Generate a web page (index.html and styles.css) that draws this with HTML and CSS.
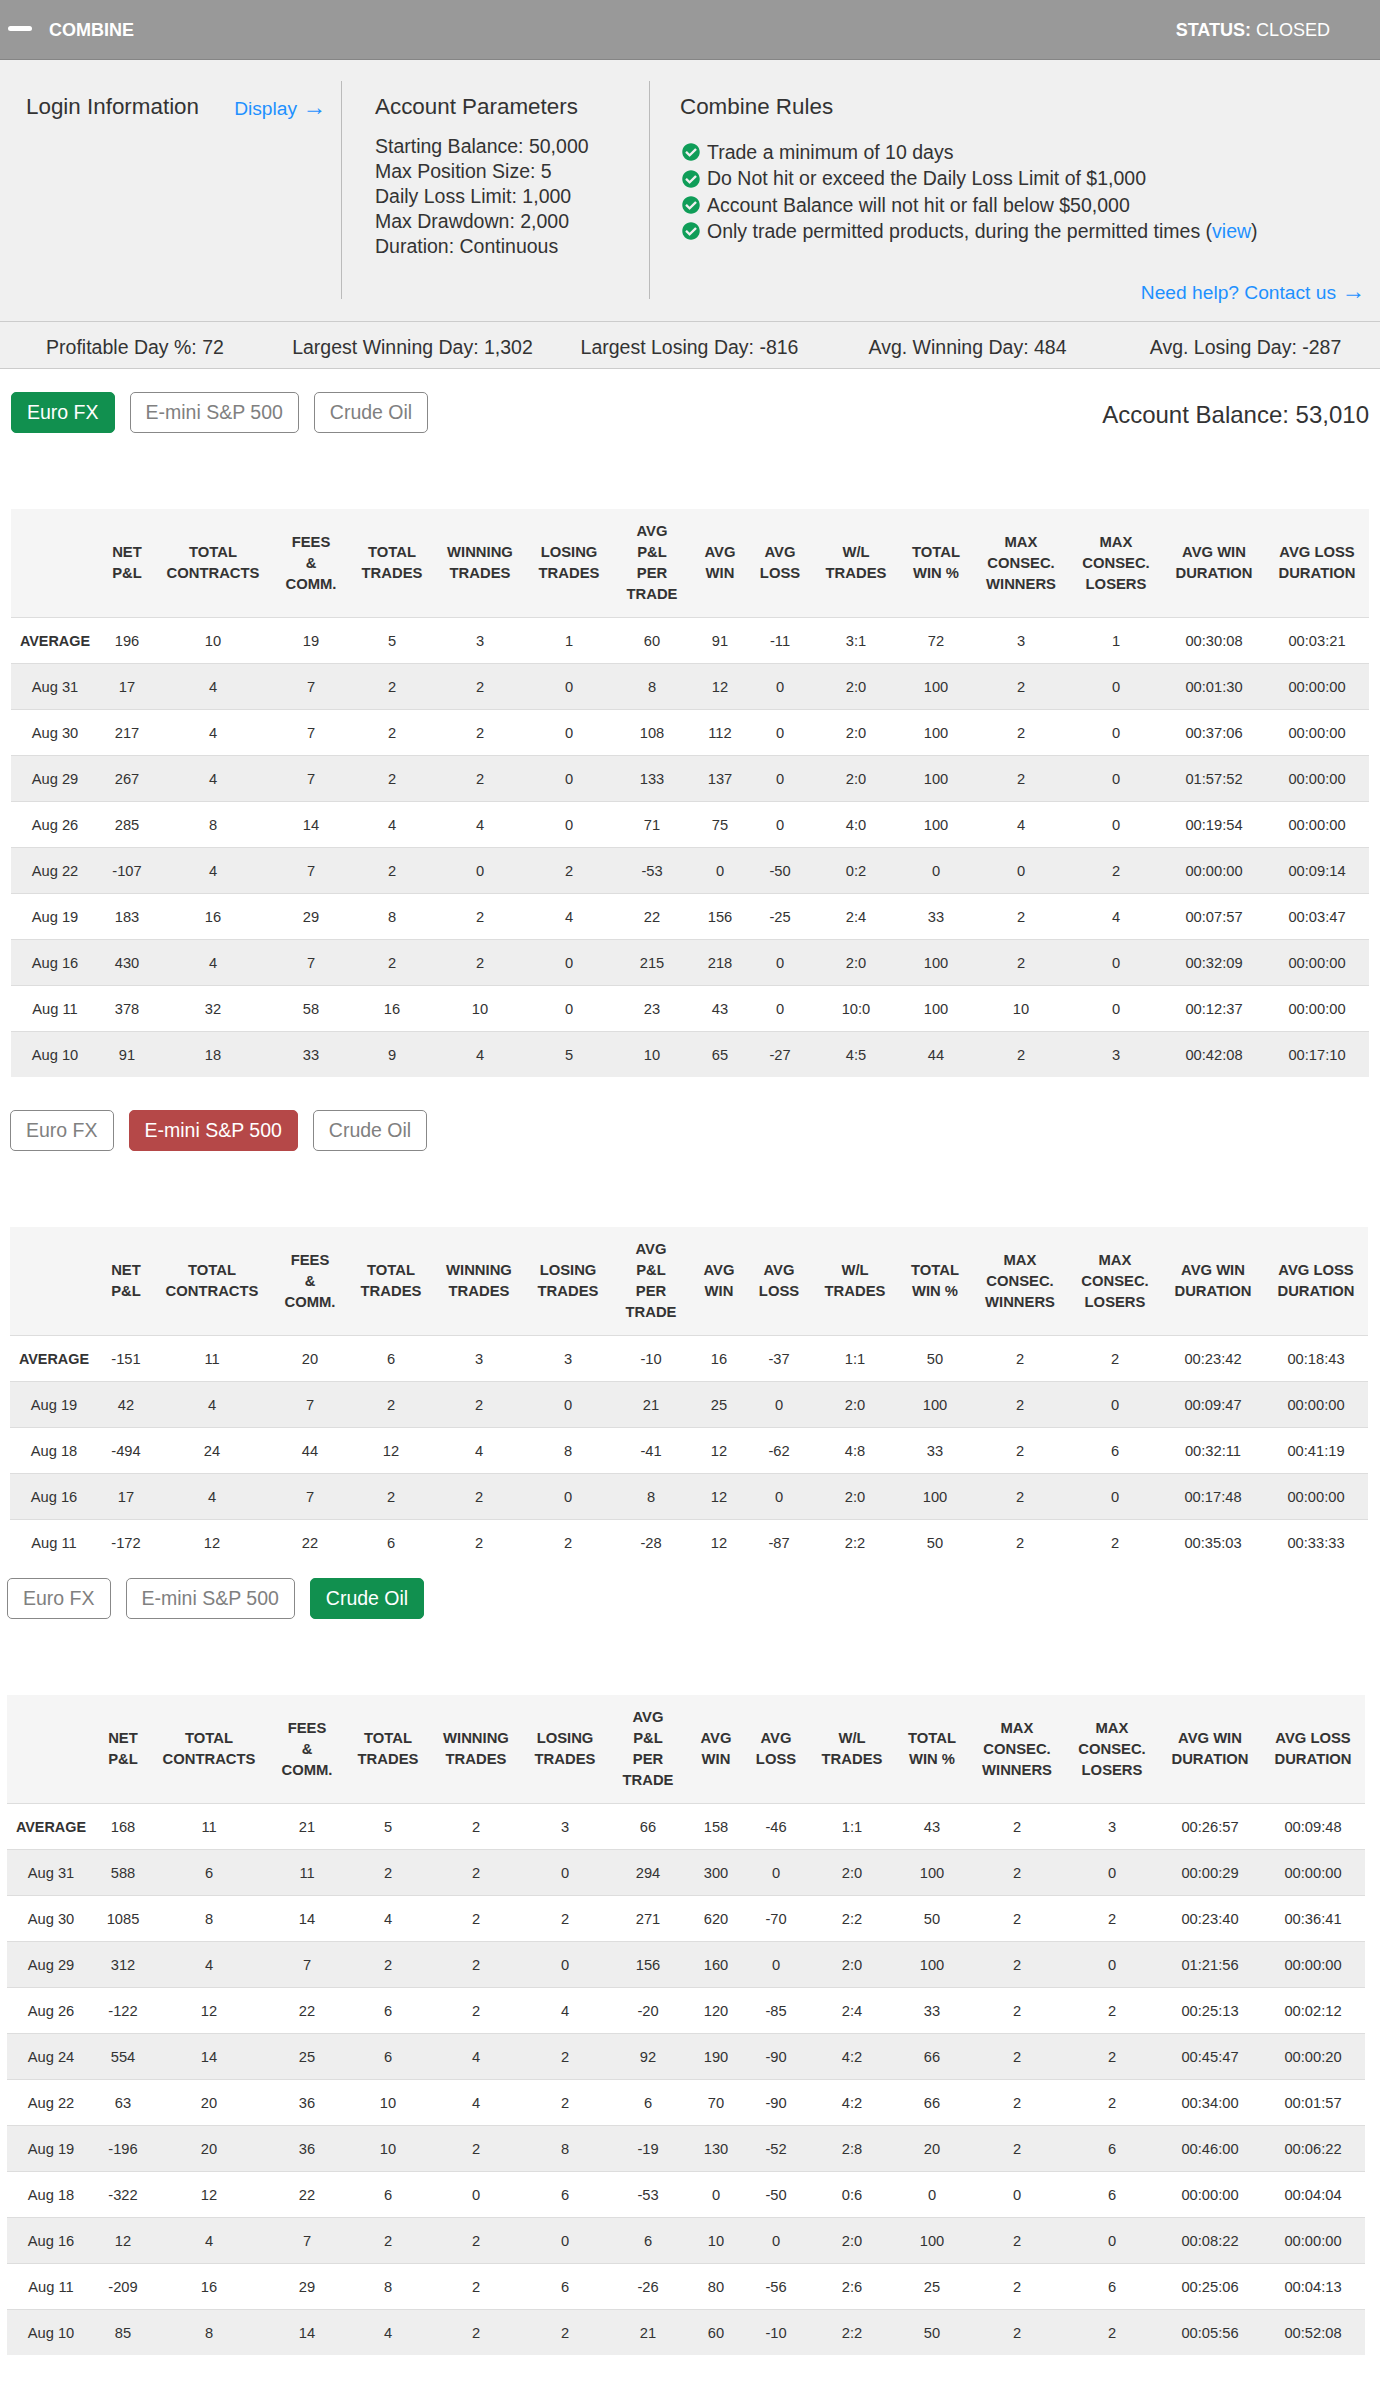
FILE: index.html
```html
<!DOCTYPE html>
<html lang="en">
<head>
<meta charset="utf-8">
<title>Combine</title>
<link rel="stylesheet" href="styles.css">
</head>
<body>
<svg class="defs" width="0" height="0" aria-hidden="true">
  <symbol id="check" viewBox="0 0 512 512"><path d="M504 256c0 136.967-111.033 248-248 248S8 392.967 8 256 119.033 8 256 8s248 111.033 248 248zM227.314 387.314l184-184c6.248-6.248 6.248-16.379 0-22.627l-22.627-22.627c-6.248-6.249-16.379-6.249-22.628 0L216 308.118l-70.059-70.059c-6.248-6.248-16.379-6.248-22.628 0l-22.627 22.627c-6.248 6.248-6.248 16.379 0 22.627l104 104c6.249 6.249 16.379 6.249 22.628.001z"/></symbol>
</svg>
<header class="topbar">
  <div class="topbar-left"><span class="minus"></span><b>COMBINE</b></div>
  <div class="status"><b>STATUS:</b> CLOSED</div>
</header>
<section class="panel">
  <div class="col col-login">
    <h2>Login Information</h2>
    <a class="link display" href="#">Display <span class="arrow">→</span></a>
  </div>
  <div class="col col-params">
    <h2>Account Parameters</h2>
    <ul class="params">
      <li>Starting Balance: 50,000</li>
      <li>Max Position Size: 5</li>
      <li>Daily Loss Limit: 1,000</li>
      <li>Max Drawdown: 2,000</li>
      <li>Duration: Continuous</li>
    </ul>
  </div>
  <div class="col col-rules">
    <h2>Combine Rules</h2>
    <ul class="rules">
      <li><svg class="ok"><use href="#check"/></svg>Trade a minimum of 10 days</li>
      <li><svg class="ok"><use href="#check"/></svg>Do Not hit or exceed the Daily Loss Limit of $1,000</li>
      <li><svg class="ok"><use href="#check"/></svg>Account Balance will not hit or fall below $50,000</li>
      <li><svg class="ok"><use href="#check"/></svg>Only trade permitted products, during the permitted times (<a class="link" href="#">view</a>)</li>
    </ul>
    <a class="link help" href="#">Need help? Contact us <span class="arrow">→</span></a>
  </div>
</section>
<section class="stats">
  <div>Profitable Day %: 72</div>
  <div>Largest Winning Day: 1,302</div>
  <div>Largest Losing Day: -816</div>
  <div>Avg. Winning Day: 484</div>
  <div>Avg. Losing Day: -287</div>
</section>
<main class="content">
  <section class="product product-euro">
    <div class="tabs-row">
      <div class="tabs">
        <a class="tab tab-green" href="#">Euro FX</a>
        <a class="tab" href="#">E-mini S&amp;P 500</a>
        <a class="tab" href="#">Crude Oil</a>
      </div>
      <div class="balance">Account Balance: 53,010</div>
    </div>
    <table class="stats-table">
      <colgroup><col class="c1"><col class="c2"><col class="c3"><col class="c4"><col class="c5"><col class="c6"><col class="c7"><col class="c8"><col class="c9"><col class="c10"><col class="c11"><col class="c12"><col class="c13"><col class="c14"><col class="c15"><col class="c16"></colgroup>
      <thead><tr><th></th><th>NET<br>P&amp;L</th><th>TOTAL<br>CONTRACTS</th><th>FEES<br>&amp;<br>COMM.</th><th>TOTAL<br>TRADES</th><th>WINNING<br>TRADES</th><th>LOSING<br>TRADES</th><th>AVG<br>P&amp;L<br>PER<br>TRADE</th><th>AVG<br>WIN</th><th>AVG<br>LOSS</th><th>W/L<br>TRADES</th><th>TOTAL<br>WIN %</th><th>MAX<br>CONSEC.<br>WINNERS</th><th>MAX<br>CONSEC.<br>LOSERS</th><th>AVG WIN<br>DURATION</th><th>AVG LOSS<br>DURATION</th></tr></thead>
      <tbody>
        <tr><td class="avg">AVERAGE</td><td>196</td><td>10</td><td>19</td><td>5</td><td>3</td><td>1</td><td>60</td><td>91</td><td>-11</td><td>3:1</td><td>72</td><td>3</td><td>1</td><td>00:30:08</td><td>00:03:21</td></tr>
        <tr><td>Aug 31</td><td>17</td><td>4</td><td>7</td><td>2</td><td>2</td><td>0</td><td>8</td><td>12</td><td>0</td><td>2:0</td><td>100</td><td>2</td><td>0</td><td>00:01:30</td><td>00:00:00</td></tr>
        <tr><td>Aug 30</td><td>217</td><td>4</td><td>7</td><td>2</td><td>2</td><td>0</td><td>108</td><td>112</td><td>0</td><td>2:0</td><td>100</td><td>2</td><td>0</td><td>00:37:06</td><td>00:00:00</td></tr>
        <tr><td>Aug 29</td><td>267</td><td>4</td><td>7</td><td>2</td><td>2</td><td>0</td><td>133</td><td>137</td><td>0</td><td>2:0</td><td>100</td><td>2</td><td>0</td><td>01:57:52</td><td>00:00:00</td></tr>
        <tr><td>Aug 26</td><td>285</td><td>8</td><td>14</td><td>4</td><td>4</td><td>0</td><td>71</td><td>75</td><td>0</td><td>4:0</td><td>100</td><td>4</td><td>0</td><td>00:19:54</td><td>00:00:00</td></tr>
        <tr><td>Aug 22</td><td>-107</td><td>4</td><td>7</td><td>2</td><td>0</td><td>2</td><td>-53</td><td>0</td><td>-50</td><td>0:2</td><td>0</td><td>0</td><td>2</td><td>00:00:00</td><td>00:09:14</td></tr>
        <tr><td>Aug 19</td><td>183</td><td>16</td><td>29</td><td>8</td><td>2</td><td>4</td><td>22</td><td>156</td><td>-25</td><td>2:4</td><td>33</td><td>2</td><td>4</td><td>00:07:57</td><td>00:03:47</td></tr>
        <tr><td>Aug 16</td><td>430</td><td>4</td><td>7</td><td>2</td><td>2</td><td>0</td><td>215</td><td>218</td><td>0</td><td>2:0</td><td>100</td><td>2</td><td>0</td><td>00:32:09</td><td>00:00:00</td></tr>
        <tr><td>Aug 11</td><td>378</td><td>32</td><td>58</td><td>16</td><td>10</td><td>0</td><td>23</td><td>43</td><td>0</td><td>10:0</td><td>100</td><td>10</td><td>0</td><td>00:12:37</td><td>00:00:00</td></tr>
        <tr><td>Aug 10</td><td>91</td><td>18</td><td>33</td><td>9</td><td>4</td><td>5</td><td>10</td><td>65</td><td>-27</td><td>4:5</td><td>44</td><td>2</td><td>3</td><td>00:42:08</td><td>00:17:10</td></tr>
      </tbody>
    </table>
  </section>
  <section class="product product-emini">
    <div class="tabs-row">
      <div class="tabs">
        <a class="tab" href="#">Euro FX</a>
        <a class="tab tab-red" href="#">E-mini S&amp;P 500</a>
        <a class="tab" href="#">Crude Oil</a>
      </div>
    </div>
    <table class="stats-table">
      <colgroup><col class="c1"><col class="c2"><col class="c3"><col class="c4"><col class="c5"><col class="c6"><col class="c7"><col class="c8"><col class="c9"><col class="c10"><col class="c11"><col class="c12"><col class="c13"><col class="c14"><col class="c15"><col class="c16"></colgroup>
      <thead><tr><th></th><th>NET<br>P&amp;L</th><th>TOTAL<br>CONTRACTS</th><th>FEES<br>&amp;<br>COMM.</th><th>TOTAL<br>TRADES</th><th>WINNING<br>TRADES</th><th>LOSING<br>TRADES</th><th>AVG<br>P&amp;L<br>PER<br>TRADE</th><th>AVG<br>WIN</th><th>AVG<br>LOSS</th><th>W/L<br>TRADES</th><th>TOTAL<br>WIN %</th><th>MAX<br>CONSEC.<br>WINNERS</th><th>MAX<br>CONSEC.<br>LOSERS</th><th>AVG WIN<br>DURATION</th><th>AVG LOSS<br>DURATION</th></tr></thead>
      <tbody>
        <tr><td class="avg">AVERAGE</td><td>-151</td><td>11</td><td>20</td><td>6</td><td>3</td><td>3</td><td>-10</td><td>16</td><td>-37</td><td>1:1</td><td>50</td><td>2</td><td>2</td><td>00:23:42</td><td>00:18:43</td></tr>
        <tr><td>Aug 19</td><td>42</td><td>4</td><td>7</td><td>2</td><td>2</td><td>0</td><td>21</td><td>25</td><td>0</td><td>2:0</td><td>100</td><td>2</td><td>0</td><td>00:09:47</td><td>00:00:00</td></tr>
        <tr><td>Aug 18</td><td>-494</td><td>24</td><td>44</td><td>12</td><td>4</td><td>8</td><td>-41</td><td>12</td><td>-62</td><td>4:8</td><td>33</td><td>2</td><td>6</td><td>00:32:11</td><td>00:41:19</td></tr>
        <tr><td>Aug 16</td><td>17</td><td>4</td><td>7</td><td>2</td><td>2</td><td>0</td><td>8</td><td>12</td><td>0</td><td>2:0</td><td>100</td><td>2</td><td>0</td><td>00:17:48</td><td>00:00:00</td></tr>
        <tr><td>Aug 11</td><td>-172</td><td>12</td><td>22</td><td>6</td><td>2</td><td>2</td><td>-28</td><td>12</td><td>-87</td><td>2:2</td><td>50</td><td>2</td><td>2</td><td>00:35:03</td><td>00:33:33</td></tr>
      </tbody>
    </table>
  </section>
  <section class="product product-crude">
    <div class="tabs-row">
      <div class="tabs">
        <a class="tab" href="#">Euro FX</a>
        <a class="tab" href="#">E-mini S&amp;P 500</a>
        <a class="tab tab-green" href="#">Crude Oil</a>
      </div>
    </div>
    <table class="stats-table">
      <colgroup><col class="c1"><col class="c2"><col class="c3"><col class="c4"><col class="c5"><col class="c6"><col class="c7"><col class="c8"><col class="c9"><col class="c10"><col class="c11"><col class="c12"><col class="c13"><col class="c14"><col class="c15"><col class="c16"></colgroup>
      <thead><tr><th></th><th>NET<br>P&amp;L</th><th>TOTAL<br>CONTRACTS</th><th>FEES<br>&amp;<br>COMM.</th><th>TOTAL<br>TRADES</th><th>WINNING<br>TRADES</th><th>LOSING<br>TRADES</th><th>AVG<br>P&amp;L<br>PER<br>TRADE</th><th>AVG<br>WIN</th><th>AVG<br>LOSS</th><th>W/L<br>TRADES</th><th>TOTAL<br>WIN %</th><th>MAX<br>CONSEC.<br>WINNERS</th><th>MAX<br>CONSEC.<br>LOSERS</th><th>AVG WIN<br>DURATION</th><th>AVG LOSS<br>DURATION</th></tr></thead>
      <tbody>
        <tr><td class="avg">AVERAGE</td><td>168</td><td>11</td><td>21</td><td>5</td><td>2</td><td>3</td><td>66</td><td>158</td><td>-46</td><td>1:1</td><td>43</td><td>2</td><td>3</td><td>00:26:57</td><td>00:09:48</td></tr>
        <tr><td>Aug 31</td><td>588</td><td>6</td><td>11</td><td>2</td><td>2</td><td>0</td><td>294</td><td>300</td><td>0</td><td>2:0</td><td>100</td><td>2</td><td>0</td><td>00:00:29</td><td>00:00:00</td></tr>
        <tr><td>Aug 30</td><td>1085</td><td>8</td><td>14</td><td>4</td><td>2</td><td>2</td><td>271</td><td>620</td><td>-70</td><td>2:2</td><td>50</td><td>2</td><td>2</td><td>00:23:40</td><td>00:36:41</td></tr>
        <tr><td>Aug 29</td><td>312</td><td>4</td><td>7</td><td>2</td><td>2</td><td>0</td><td>156</td><td>160</td><td>0</td><td>2:0</td><td>100</td><td>2</td><td>0</td><td>01:21:56</td><td>00:00:00</td></tr>
        <tr><td>Aug 26</td><td>-122</td><td>12</td><td>22</td><td>6</td><td>2</td><td>4</td><td>-20</td><td>120</td><td>-85</td><td>2:4</td><td>33</td><td>2</td><td>2</td><td>00:25:13</td><td>00:02:12</td></tr>
        <tr><td>Aug 24</td><td>554</td><td>14</td><td>25</td><td>6</td><td>4</td><td>2</td><td>92</td><td>190</td><td>-90</td><td>4:2</td><td>66</td><td>2</td><td>2</td><td>00:45:47</td><td>00:00:20</td></tr>
        <tr><td>Aug 22</td><td>63</td><td>20</td><td>36</td><td>10</td><td>4</td><td>2</td><td>6</td><td>70</td><td>-90</td><td>4:2</td><td>66</td><td>2</td><td>2</td><td>00:34:00</td><td>00:01:57</td></tr>
        <tr><td>Aug 19</td><td>-196</td><td>20</td><td>36</td><td>10</td><td>2</td><td>8</td><td>-19</td><td>130</td><td>-52</td><td>2:8</td><td>20</td><td>2</td><td>6</td><td>00:46:00</td><td>00:06:22</td></tr>
        <tr><td>Aug 18</td><td>-322</td><td>12</td><td>22</td><td>6</td><td>0</td><td>6</td><td>-53</td><td>0</td><td>-50</td><td>0:6</td><td>0</td><td>0</td><td>6</td><td>00:00:00</td><td>00:04:04</td></tr>
        <tr><td>Aug 16</td><td>12</td><td>4</td><td>7</td><td>2</td><td>2</td><td>0</td><td>6</td><td>10</td><td>0</td><td>2:0</td><td>100</td><td>2</td><td>0</td><td>00:08:22</td><td>00:00:00</td></tr>
        <tr><td>Aug 11</td><td>-209</td><td>16</td><td>29</td><td>8</td><td>2</td><td>6</td><td>-26</td><td>80</td><td>-56</td><td>2:6</td><td>25</td><td>2</td><td>6</td><td>00:25:06</td><td>00:04:13</td></tr>
        <tr><td>Aug 10</td><td>85</td><td>8</td><td>14</td><td>4</td><td>2</td><td>2</td><td>21</td><td>60</td><td>-10</td><td>2:2</td><td>50</td><td>2</td><td>2</td><td>00:05:56</td><td>00:52:08</td></tr>
      </tbody>
    </table>
  </section>
</main>
</body>
</html>
```

FILE: styles.css
```css
* { box-sizing: border-box; }
html, body { margin: 0; padding: 0; }
body {
  font-family: "Liberation Sans", Arial, sans-serif;
  color: #333;
  background: #fff;
}
.defs { position: absolute; }

.topbar {
  display: flex;
  justify-content: space-between;
  align-items: center;
  height: 60px;
  background: #999;
  border-bottom: 1px solid #858585;
  color: #fff;
  font-size: 18px;
  padding: 1px 50px 0 8px;
}
.topbar-left { display: flex; align-items: center; }
.minus {
  width: 24px;
  height: 5px;
  border-radius: 3px;
  background: #fff;
  margin: 0 17px 4px 0;
}

.panel {
  display: flex;
  height: 262px;
  padding-top: 21px;
  background: #f0f0f0;
  border-bottom: 1px solid #ccc;
}
.col { height: 218px; padding-top: 12px; }
.col h2 {
  margin: 0;
  font-size: 22.4px;
  font-weight: 400;
  line-height: 27px;
}
.col-login {
  display: flex;
  justify-content: space-between;
  width: 342px;
  padding-left: 26px;
  padding-right: 15px;
  border-right: 1px solid #bbb;
}
.col-params {
  width: 308px;
  padding-left: 33px;
  border-right: 1px solid #bbb;
}
.col-rules {
  flex: 1;
  padding-left: 30px;
  padding-right: 15px;
  display: flex;
  flex-direction: column;
}
.link { color: #1e90ff; text-decoration: none; }
.arrow { font-size: 1.23em; line-height: 1; }
.display { font-size: 19.2px; line-height: 27px; padding-top: 2px; white-space: nowrap; }
.params, .rules { list-style: none; margin: 0; padding: 0; font-size: 19.5px; }
.params { margin-top: 13.5px; line-height: 25px; }
.rules { margin-top: 19px; line-height: 26.4px; }
.rules li { display: flex; align-items: center; white-space: pre; }
.ok {
  width: 18px;
  height: 18px;
  margin: 0 7px 0 2px;
  fill: #0f9d58;
  flex: none;
}
.help {
  margin-top: 35px;
  text-align: right;
  font-size: 19.2px;
  line-height: 25px;
}

.stats {
  display: grid;
  grid-template-columns: 270px 285px 269px 287px 269px;
  align-items: center;
  height: 47px;
  padding-top: 5px;
  background: #f0f0f0;
  border-bottom: 1px solid #ccc;
  font-size: 19.5px;
  text-align: center;
}

.content { padding: 23px 0 38px; }
.product { width: 1358px; }
.product-euro { margin: 0 0 33px 11px; }
.product-emini { margin: 0 0 13px 10px; }
.product-crude { margin: 0 0 0 7px; }

.tabs-row {
  display: flex;
  justify-content: space-between;
  align-items: flex-start;
  margin-bottom: 76px;
}
.tabs { display: flex; gap: 15px; }
.tab {
  display: block;
  height: 41px;
  line-height: 39px;
  padding: 0 15px;
  font-size: 19.5px;
  color: #808080;
  text-decoration: none;
  background: #fff;
  border: 1px solid #888;
  border-radius: 5px;
}
.tab-green { background: #11904f; border-color: #11904f; color: #fff; }
.tab-red { background: #b54848; border-color: #b54848; color: #fff; }
.balance {
  font-size: 24px;
  line-height: 28px;
  padding-top: 9px;
}

.stats-table {
  width: 1358px;
  table-layout: fixed;
  border-collapse: separate;
  border-spacing: 0;
  font-size: 14.7px;
  text-align: center;
}
.stats-table th {
  height: 108px;
  padding: 0;
  background: #f5f5f5;
  font-size: 14.8px;
  font-weight: 700;
  line-height: 21px;
  vertical-align: middle;
}
.stats-table td {
  height: 46px;
  padding: 0;
  border-top: 1px solid #ddd;
  vertical-align: middle;
}
.stats-table tbody tr:nth-child(even) td { background: #eee; }
.stats-table td.avg { font-size: 14.4px; font-weight: 700; }
.c1 { width: 88px; }
.c2 { width: 56px; }
.c3 { width: 116px; }
.c4 { width: 80px; }
.c5 { width: 82px; }
.c6 { width: 94px; }
.c7 { width: 84px; }
.c8 { width: 82px; }
.c9 { width: 54px; }
.c10 { width: 66px; }
.c11 { width: 86px; }
.c12 { width: 74px; }
.c13 { width: 96px; }
.c14 { width: 94px; }
.c15 { width: 102px; }
.c16 { width: 104px; }
```
